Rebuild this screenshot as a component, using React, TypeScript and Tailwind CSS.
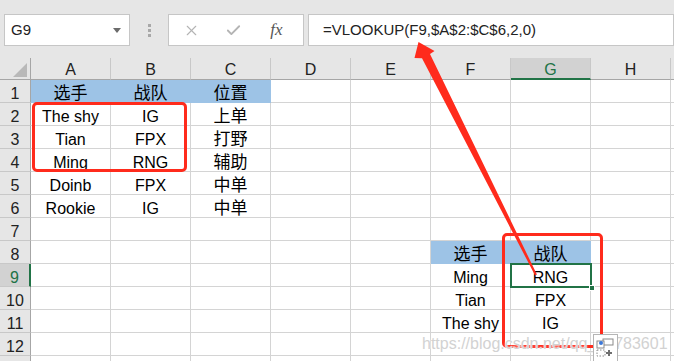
import { X, Check } from 'lucide-react';

const cols = ['A', 'B', 'C', 'D', 'E', 'F', 'G', 'H'];

const cells: Record<string, string> = {
    A1: '选手', B1: '战队', C1: '位置',
    A2: 'The shy', B2: 'IG', C2: '上单',
    A3: 'Tian', B3: 'FPX', C3: '打野',
    A4: 'Ming', B4: 'RNG', C4: '辅助',
    A5: 'Doinb', B5: 'FPX', C5: '中单',
    A6: 'Rookie', B6: 'IG', C6: '中单',
    F8: '选手', G8: '战队',
    F9: 'Ming', G9: 'RNG',
    F10: 'Tian', G10: 'FPX',
    F11: 'The shy', G11: 'IG',
};

const blue = ['A1', 'B1', 'C1', 'F8', 'G8'];
const rows = Array.from({ length: 13 }, (_, i) => i + 1);

function Cell({ id }: { id: string }) {
    const text = cells[id];
    const isBlue = blue.includes(id);
    const cjk = text ? /[\u4e00-\u9fff]/.test(text) : false;
    return (
        <div
            className={`w-[80px] h-[23px] shrink-0 border-r border-b text-center pt-[6px] leading-[16px] text-black whitespace-nowrap ${
                isBlue ? 'bg-[#9dc3e6] border-[#9dc3e6]' : 'border-[#d4d4d4]'
            } ${cjk ? 'text-[17px]' : 'text-[16px]'}`}
        >
            {text}
        </div>
    );
}

export default function App() {
    return (
        <div className="relative w-[674px] h-[361px] overflow-hidden bg-white font-['Liberation_Sans','Noto_Sans_CJK_SC',sans-serif]">
            {/* Formula bar */}
            <div className="h-[58px] bg-[#e6e6e6] flex items-start pt-[14px] pl-[4px]">
                <div className="w-[126px] h-[32px] bg-white border border-[#c6c6c6] flex items-center justify-between pl-[6px] pr-[8px]">
                    <span className="text-[15px] text-[#222]">G9</span>
                    <span className="w-0 h-0 border-l-[4px] border-r-[4px] border-t-[5px] border-l-transparent border-r-transparent border-t-[#6b6b6b]" />
                </div>
                <div className="w-[38px] h-[32px] flex flex-col items-center justify-center gap-[2px]">
                    <div className="w-[3px] h-[3px] bg-[#a8a8a8]" />
                    <div className="w-[3px] h-[3px] bg-[#a8a8a8]" />
                    <div className="w-[3px] h-[3px] bg-[#a8a8a8]" />
                </div>
                <div className="w-[136px] h-[32px] bg-white border border-[#c6c6c6] flex items-center">
                    <div className="w-[43px] flex justify-center pl-[1px]">
                        <X size={17} strokeWidth={1.6} className="text-[#b4b4b4]" />
                    </div>
                    <div className="w-[43px] flex justify-center">
                        <Check size={17} strokeWidth={2.6} className="text-[#b4b4b4]" />
                    </div>
                    <div className="w-[43px] flex justify-center">
                        <span className="font-['Liberation_Serif',serif] italic text-[17px] text-[#555]">fx</span>
                    </div>
                </div>
                <div className="ml-[4px] flex-1 h-[32px] bg-white border border-[#c6c6c6] flex items-center pl-[14px]">
                    <span className="text-[15px] text-[#222]">=VLOOKUP(F9,$A$2:$C$6,2,0)</span>
                </div>
            </div>

            {/* Column headers */}
            <div className="flex h-[22px] bg-[#e6e6e6]">
                <div className="w-[31px] shrink-0 border-r border-b border-[#a6a6a6] relative">
                    <svg width="31" height="22" className="absolute inset-0">
                        <polygon points="13,19 27,19 27,5" fill="#b9b9b9" />
                    </svg>
                </div>
                {cols.map((c) => (
                    <div
                        key={c}
                        className={`w-[80px] shrink-0 border-r border-[#c8c8c8] text-center text-[16px] pt-[4px] leading-[16px] ${
                            c === 'G'
                                ? 'bg-[#d2d2d2] border-b-2 border-b-[#217346] text-[#217346]'
                                : 'border-b border-b-[#a6a6a6] text-[#222]'
                        }`}
                    >
                        {c}
                    </div>
                ))}
                <div className="flex-1 border-b border-[#a6a6a6]" />
            </div>

            {/* Rows */}
            {rows.map((r) => (
                <div key={r} className="flex">
                    <div
                        className={`w-[31px] h-[23px] shrink-0 border-b border-b-[#c8c8c8] text-center text-[16px] pt-[6px] leading-[16px] ${
                            r === 9
                                ? 'bg-[#d2d2d2] border-r-2 border-r-[#217346] text-[#217346]'
                                : 'bg-[#e6e6e6] border-r border-r-[#a6a6a6] text-[#222]'
                        }`}
                    >
                        {r < 13 ? r : ''}
                    </div>
                    {cols.map((c) => (
                        <Cell key={c} id={`${c}${r}`} />
                    ))}
                    <div className="flex-1 h-[23px] border-b border-[#d4d4d4]" />
                </div>
            ))}

            {/* Active cell G9 */}
            <div className="absolute left-[510px] top-[263px] w-[82px] h-[25px] border-2 border-[#217346]" />
            <div className="absolute left-[589px] top-[285px] w-[6px] h-[6px] bg-[#217346] border border-white" />

            {/* Red annotation boxes */}
            <div className="absolute left-[32px] top-[102px] w-[155px] h-[70px] border-[3px] border-[#ff2b1c] rounded-[5px]" />
            <div className="absolute left-[502px] top-[233px] w-[101px] h-[115px] border-[3px] border-[#ff2b1c] rounded-[5px]" />

            {/* Arrow */}
            <svg width="674" height="361" className="absolute inset-0 pointer-events-none">
                <polygon
                    points="418.5,42 434.5,51 430,54.1 536.9,274.5 535.1,275.5 422,58.3 414.5,58"
                    fill="#ff2b1c"
                />
            </svg>

            {/* Watermark */}
            <div className="absolute left-[422px] top-[335px] text-[16px] leading-[18px] text-[#d2d2d2] [text-shadow:0_0_2px_#fff,0_0_1px_#fff] whitespace-nowrap">
                https://blog.csdn.net/qq_38783601
            </div>

            {/* Paste options */}
            <div className="absolute left-[593px] top-[334px] w-[25px] h-[28px] bg-white border border-[#b5b5b5]">
                <svg width="25" height="28" className="absolute left-0 top-0">
                    <rect x="9" y="4" width="10" height="6" fill="white" stroke="#8a8a8a" strokeWidth="1" />
                    <rect x="3" y="6" width="7" height="7" fill="white" stroke="#8a8a8a" strokeWidth="1" />
                    <circle cx="7" cy="8" r="2" fill="#3c78d8" />
                    <rect x="3" y="15" width="8" height="6" fill="none" stroke="#8a8a8a" strokeWidth="1" strokeDasharray="1.5 1.5" />
                    <path d="M15 15 V21 M12 18 H18" stroke="#6f6f6f" strokeWidth="2" />
                </svg>
            </div>
        </div>
    );
}
